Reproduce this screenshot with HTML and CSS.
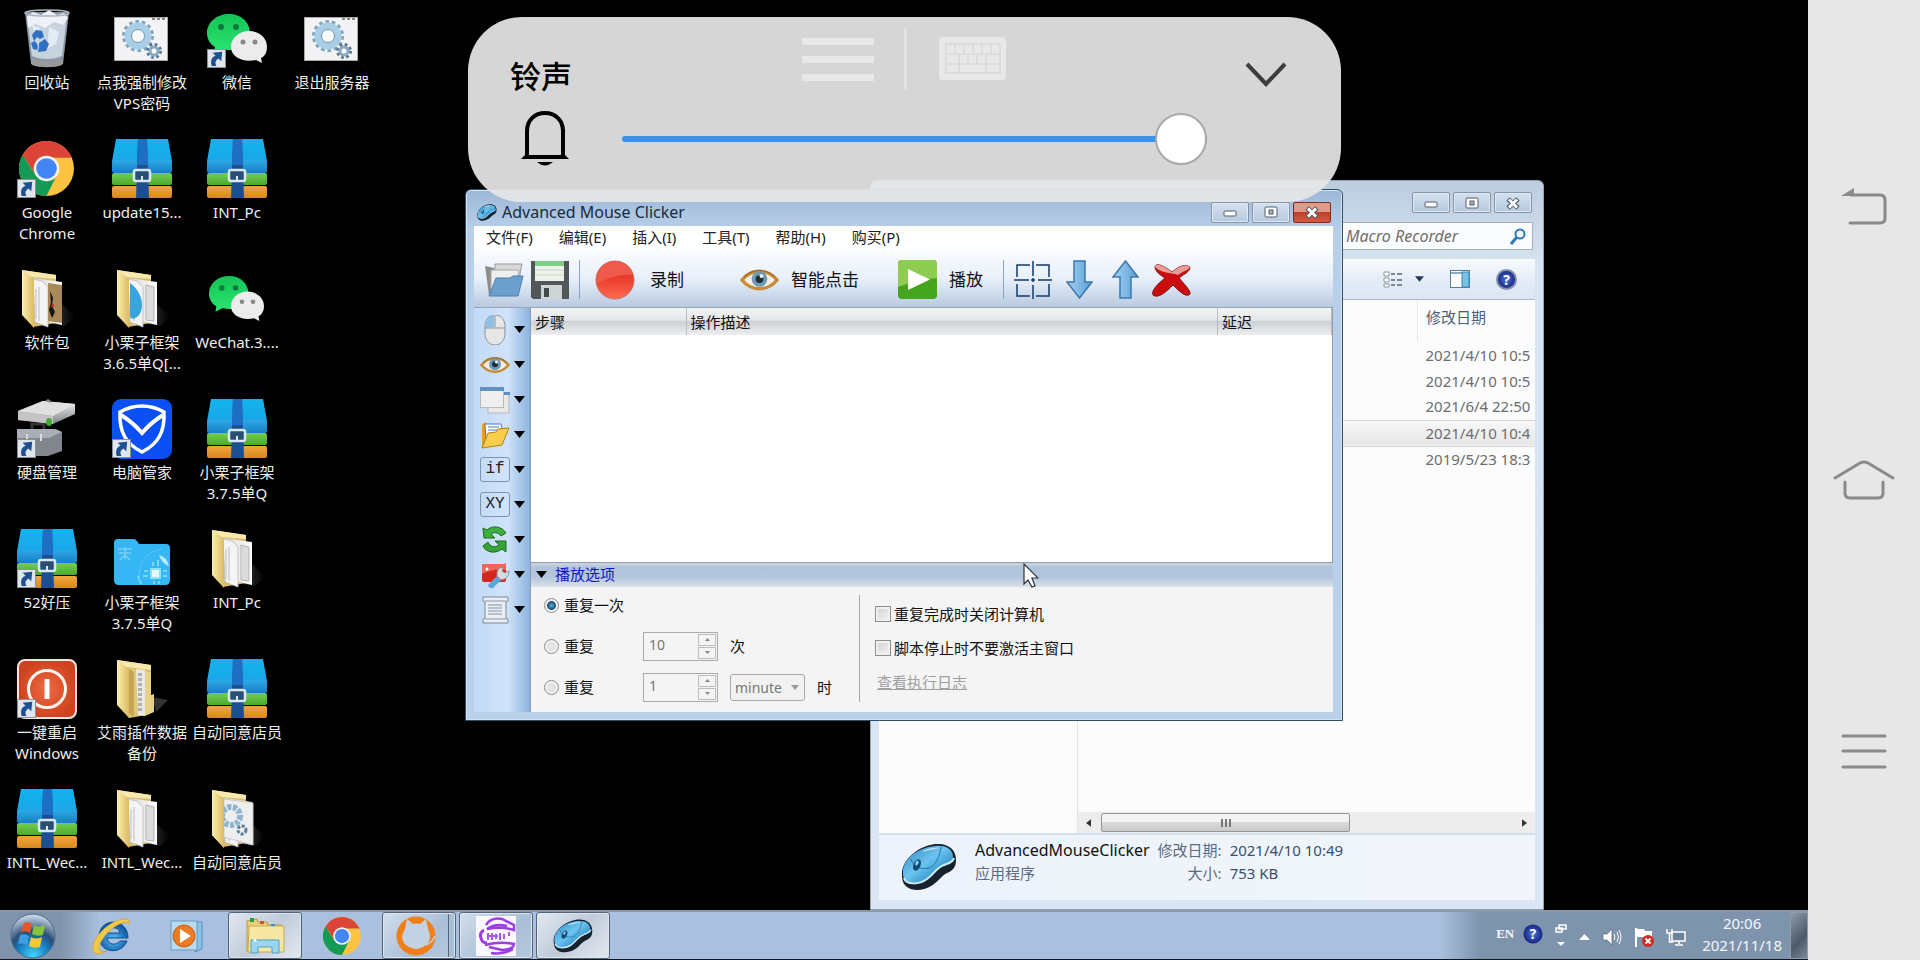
FILE: index.html
```html
<!DOCTYPE html>
<html lang="zh-CN">

<head>
    <meta charset="UTF-8">
    <meta name="viewport" content="width=device-width, initial-scale=1.0">
    <title>Remote Desktop</title>
    <link rel="stylesheet" href="styles.css">
</head>

<body>
    <!-- shared icons -->
    <svg class="sprite" aria-hidden="true">
        <defs>
            <linearGradient id="g-sky" x1="0" y1="0" x2="0" y2="1">
                <stop offset="0" stop-color="#12b4ee" /><stop offset="1" stop-color="#1aa6e8" />
            </linearGradient>
            <linearGradient id="g-blue" x1="0" y1="0" x2="0" y2="1">
                <stop offset="0" stop-color="#2fa8e4" /><stop offset="1" stop-color="#1580c8" />
            </linearGradient>
            <linearGradient id="g-green" x1="0" y1="0" x2="0" y2="1">
                <stop offset="0" stop-color="#74cc50" /><stop offset="1" stop-color="#4bab2d" />
            </linearGradient>
            <linearGradient id="g-orange" x1="0" y1="0" x2="0" y2="1">
                <stop offset="0" stop-color="#f0a63c" /><stop offset="1" stop-color="#d98720" />
            </linearGradient>
            <linearGradient id="g-folder" x1="0" y1="0" x2="1" y2="0">
                <stop offset="0" stop-color="#fbefaf" /><stop offset="1" stop-color="#dcbb62" />
            </linearGradient>
            <linearGradient id="g-paper" x1="0" y1="0" x2="1" y2="0">
                <stop offset="0" stop-color="#d2d2d2" /><stop offset="1" stop-color="#ffffff" />
            </linearGradient>
            <linearGradient id="g-metal" x1="0" y1="0" x2="0" y2="1">
                <stop offset="0" stop-color="#f4f4f4" /><stop offset="1" stop-color="#7d8286" />
            </linearGradient>
            <linearGradient id="g-wx" x1="0" y1="0" x2="0" y2="1">
                <stop offset="0" stop-color="#12c455" /><stop offset="1" stop-color="#2ee472" />
            </linearGradient>
            <linearGradient id="g-mouse" x1="0" y1="0" x2="1" y2="1">
                <stop offset="0" stop-color="#2f86c2" /><stop offset=".45" stop-color="#6cc4ee" /><stop offset=".75" stop-color="#2c8fcb" /><stop offset="1" stop-color="#125590" />
            </linearGradient>
            <linearGradient id="g-arrow" x1="0" y1="0" x2="1" y2="0">
                <stop offset="0" stop-color="#a4d3f4" /><stop offset="1" stop-color="#5b9ed6" />
            </linearGradient>
            <radialGradient id="g-ie" cx=".5" cy=".6">
                <stop offset="0" stop-color="#5cc4f6" /><stop offset="1" stop-color="#125ba8" />
            </radialGradient>
            <linearGradient id="g-ball" x1="0" y1="0" x2="0" y2="1">
                <stop offset="0" stop-color="#d81a0c" /><stop offset="1" stop-color="#ff6a52" />
            </linearGradient>
            <radialGradient id="g-power"><stop offset="0" stop-color="#ee6a42" /><stop offset="1" stop-color="#cf4220" /></radialGradient>
            <radialGradient id="g-orb" cx=".5" cy=".95" r=".9">
                <stop offset="0" stop-color="#3fd5fb" /><stop offset=".45" stop-color="#1673b4" /><stop offset=".62" stop-color="#2c4d75" /><stop offset="1" stop-color="#c3d2e2" />
            </radialGradient>
            <radialGradient id="g-help"><stop offset="0" stop-color="#4f74dc" /><stop offset="1" stop-color="#15247f" /></radialGradient>
            <linearGradient id="g-fade" x1="0" y1="0" x2="1" y2="0">
                <stop offset="0" stop-color="#4a4a4a" /><stop offset="1" stop-color="#000000" />
            </linearGradient>
        </defs>

        <symbol id="i-shortcut" viewBox="0 0 20 20">
            <rect x=".5" y=".5" width="19" height="19" fill="#dfe6ee" stroke="#8a8f96" />
            <path d="M5 18C3 11 6 8 9 7L6 4l10-1-1 10-3-3c-3 2-4 4-2 8z" fill="#1d4f91" />
        </symbol>

        <symbol id="i-zip" viewBox="0 0 60 60">
            <path d="M4 0h52l4 22H0z" fill="url(#g-sky)" />
            <rect y="21" width="60" height="13" rx="2" fill="url(#g-blue)" />
            <rect y="34" width="60" height="12" rx="2" fill="url(#g-green)" />
            <rect y="47" width="60" height="12" rx="2" fill="url(#g-orange)" />
            <path d="M26 0h9l2 59H24z" fill="#1c4f92" />
            <path d="M26 0h9l1 26H25z" fill="#1e6fc4" />
            <rect x="22" y="31" width="16" height="11" rx="2" fill="#2a4f74" stroke="#d8e8f4" stroke-width="2.500" />
            <path d="M30 37v5" stroke="#d8e8f4" stroke-width="2" />
        </symbol>

        <symbol id="i-gears" viewBox="0 0 54 44">
            <rect x=".5" y=".5" width="53" height="43" fill="#f3f3f5" stroke="#a8a8a8" />
            <path d="M38 2h3M43 2h3M48 2h3" stroke="#888" stroke-width="2" />
            <circle cx="24" cy="19" r="14" fill="none" stroke="#7fa3bf" stroke-width="4" stroke-dasharray="3.500 2.800" />
            <circle cx="24" cy="19" r="10" fill="none" stroke="#a9cfe6" stroke-width="7" />
            <circle cx="24" cy="19" r="6.500" fill="#f6f9fb" stroke="#7595ae" />
            <circle cx="40" cy="34" r="6.500" fill="none" stroke="#59748f" stroke-width="3" stroke-dasharray="2.600 2.500" />
            <circle cx="40" cy="34" r="4" fill="#fff" stroke="#88a9c3" stroke-width="3" />
        </symbol>

        <symbol id="i-wechat" viewBox="0 0 60 50">
            <path d="M22 1C10 1 0 9 0 20c0 6 3 11 8 14l-1 6 8-4c14 4 28-3 28-16C43 9 34 1 22 1z" fill="url(#g-wx)" />
            <circle cx="14" cy="14" r="3" fill="#0b7a3a" /><circle cx="29" cy="14" r="3" fill="#0b7a3a" />
            <path d="M42 18c10 0 18 7 18 16 0 5-2 9-6 11l1 5-6-3c-13 3-25-3-25-13 0-9 8-16 18-16z" fill="#ececec" />
            <circle cx="36" cy="29" r="2.500" fill="#888" /><circle cx="48" cy="29" r="2.500" fill="#888" />
        </symbol>

        <symbol id="i-chrome" viewBox="0 0 56 56">
            <circle cx="28" cy="28" r="28" fill="#fdc341" />
            <path d="M3.750 14A28 28 0 0 1 52.250 14L54 17H28L17 34z" fill="#db4437" />
            <path d="M3.750 14A28 28 0 0 0 28 56L38 36 17 34.500z" fill="#159a55" />
            <circle cx="28" cy="28" r="13" fill="#f3f3f3" />
            <circle cx="28" cy="28" r="10.500" fill="#4285f4" />
        </symbol>

        <symbol id="i-folder" viewBox="0 0 60 60">
            <path d="M44 34l14 14-10 9-12-2z" fill="url(#g-fade)" opacity=".7" />
            <path d="M5 1l34 5v48L16 58z" fill="#d9bc6c" />
            <path d="M5 1l34 5v4L14 8z" fill="#f7e9ae" />
            <path d="M16 9l29 4v43l-26-6z" fill="url(#g-paper)" />
            <path d="M34 16l8 2v34l-8-1z" fill="#dcdcdc" stroke="#b5b5b5" />
            <path d="M16 10l9 2 6 6v40L18 53z" fill="#f4f4f4" stroke="#bbb" stroke-width=".8" />
            <path d="M19 20v30M22 18v34" stroke="#bbb" />
            <path d="M5 1l12 9v49L5 46z" fill="url(#g-folder)" />
        </symbol>

        <symbol id="i-mouse" viewBox="0 0 56 46">
            <path d="M1 31C0 18 14 3 34 0c14-1 21 6 21 16 0 8-4 11-9 13-6 3-9 9-16 13-8 5-19 5-24 1C2 40 1 36 1 31z" fill="#16222d" />
            <path d="M2 29C1 17 14 4 34 2c12-1 18 4 18 11 0 6-5 7-10 9-8 3-10 9-16 13-7 5-16 6-20 3-3-2-4-5-4-9z" fill="url(#g-mouse)" />
            <path d="M3 34c2 7 15 7 23 1 7-5 9-11 17-14 5-2 9-3 10-7" fill="none" stroke="#cfe9f7" stroke-width="2" />
            <path d="M10 15c2 7 9 11 18 9 7-2 11-13 12-21" fill="none" stroke="#2675ac" />
            <path d="M20 8c6-4 14-5 19-4-7 1-13 3-19 4z" fill="#c6eafb" />
            <ellipse cx="16" cy="21" rx="3.500" ry="6" transform="rotate(24 16 21)" fill="#134a78" />
            <ellipse cx="16" cy="19" rx="1.500" ry="2.500" transform="rotate(24 16 19)" fill="#8fd6f4" />
        </symbol>

        <symbol id="i-eye" viewBox="0 0 40 26">
            <path d="M2 13C12 1 28 1 38 13 28 25 12 25 2 13z" fill="#f3eee8" stroke="#c88b35" stroke-width="3.500" />
            <circle cx="20" cy="12" r="8" fill="#6f9ab6" /><circle cx="20" cy="12" r="4" fill="#1d2d3b" />
            <circle cx="22" cy="9" r="2" fill="#fff" />
            <path d="M4 10C13 1 27 1 36 10" fill="none" stroke="#8b6430" />
        </symbol>

        <symbol id="i-down" viewBox="0 0 11 7"><path d="M0 0h11L5.500 7z" fill="#000" /></symbol>
        <symbol id="i-min" viewBox="0 0 14 14"><rect x="1" y="6" width="12" height="5" rx="1" fill="#fff" stroke="#555f6b" /></symbol>
        <symbol id="i-max" viewBox="0 0 14 14">
            <rect x="1" y="2" width="12" height="10" rx="1" fill="#fff" stroke="#555f6b" />
            <rect x="5" y="5" width="4" height="4" fill="#9fb4cb" stroke="#555f6b" />
        </symbol>
        <symbol id="i-close" viewBox="0 0 14 14">
            <path d="M2 3l10 9M12 3L2 12" stroke="#555f6b" stroke-width="5" /><path d="M3 3.500l8 8M11 3.500l-8 8" stroke="#fff" stroke-width="3" />
        </symbol>
    </svg>

    <div class="screen">
        <div class="desktop">
            <div class="icons">
                <button class="icon">
                    <svg class="pic" viewBox="0 0 60 60">
                        <path d="M8 3h44l-6 52c-8 4-24 4-32 0z" fill="#8c98a5" />
                        <path d="M10 7h40l-5 40c-8 4-22 4-30 0z" fill="#c6d2de" />
                        <path d="M10 7l6-4 8 3 8-5 8 5 7-2 4 5-5 7-9-3-9 6-9-4-8 4z" fill="#eef2f6" />
                        <path d="M32 18l10 5-3 12-9 5zM15 16l8 3-4 9z" fill="#e3ebf3" />
                        <ellipse cx="30" cy="4" rx="22" ry="3" fill="none" stroke="#aab4bd" stroke-width="1.500" />
                        <path d="M15 26l4-5 6 1 2 6-4 2-3-2-3 4zM14 34l4-2 3 5-1 4-4-1zM22 34l6-4 4 5-3 7-8 1 1-5z" fill="#2f6fc0" />
                        <path d="M14 50c8 4 24 4 32 0l-1 6c-8 3-22 3-30 0z" fill="#9a9a98" />
                    </svg>
                    <span>回收站</span>
                </button>
                <button class="icon">
                    <svg class="pic" viewBox="0 0 60 60"><use href="#i-chrome" x="2" y="2" width="55" height="55" /><use href="#i-shortcut" y="40" width="19" height="19" /></svg>
                    <span>Google<br>Chrome</span>
                </button>
                <button class="icon">
                    <svg class="pic" viewBox="0 0 60 60"><use href="#i-folder" width="60" height="60" /><path d="M31 14l14 2v38l-14-2z" fill="#a9895a" /><path d="M33 22l3 7-1 8 3 6-3 6-3-8 2-8z" fill="#111" /><path d="M34 36l3-1v3h-3z" fill="#c22" /></svg>
                    <span>软件包</span>
                </button>
                <button class="icon">
                    <svg class="pic" viewBox="0 0 60 60">
                        <path d="M0 30h38l7 3v19l-14 5H0z" fill="#80868c" /><path d="M0 30h38l7 3-13 6H0z" fill="#a9afb4" />
                        <path d="M15 30v-5h12v5" fill="none" stroke="#333" stroke-width="3" /><path d="M10 35v7M24 35v7" stroke="#ddd" stroke-width="2" />
                        <path d="M1 12L26 2l32 3v10L36 25 1 21z" fill="url(#g-metal)" /><path d="M1 12L26 2l32 3-22 12z" fill="#e0e0e0" />
                        <path d="M1 13l35 4v8L1 21z" fill="#c4c4c4" /><path d="M28 2l3-2 3 2v2z" fill="#888" /><ellipse cx="32" cy="23" rx="3" ry="4" fill="#3fae2f" />
                        <use href="#i-shortcut" y="40" width="19" height="19" />
                    </svg>
                    <span>硬盘管理</span>
                </button>
                <button class="icon">
                    <svg class="pic" viewBox="0 0 60 60"><use href="#i-zip" width="60" height="60" /><use href="#i-shortcut" y="40" width="19" height="19" /></svg>
                    <span>52好压</span>
                </button>
                <button class="icon">
                    <svg class="pic" viewBox="0 0 60 60">
                        <rect x="1" y="1" width="58" height="58" rx="7" fill="url(#g-power)" stroke="#f3e4df" stroke-width="2" />
                        <circle cx="30" cy="30" r="18.500" fill="none" stroke="#fff5ee" stroke-width="3" /><path d="M30 20v20" stroke="#fff" stroke-width="5" />
                        <use href="#i-shortcut" y="40" width="19" height="19" />
                    </svg>
                    <span>一键重启<br>Windows</span>
                </button>
                <button class="icon">
                    <svg class="pic"><use href="#i-zip" /></svg>
                    <span>INTL_Wec...</span>
                </button>

                <button class="icon">
                    <svg class="pic" viewBox="0 0 60 60"><use href="#i-gears" x="2" y="8" width="54" height="44" /></svg>
                    <span>点我强制修改<br>VPS密码</span>
                </button>
                <button class="icon">
                    <svg class="pic"><use href="#i-zip" /></svg>
                    <span>update15...</span>
                </button>
                <button class="icon">
                    <svg class="pic" viewBox="0 0 60 60"><use href="#i-folder" width="60" height="60" /><path d="M18 14c7 5 12 13 12 22 0 7-3 12-9 14l-3-2z" fill="#38a6dc" /></svg>
                    <span>小栗子框架<br>3.6.5单Q[...</span>
                </button>
                <button class="icon">
                    <svg class="pic" viewBox="0 0 60 60">
                        <rect width="60" height="60" rx="9" fill="#0a50f5" />
                        <path d="M30 7c7 0 15 2 22 6 1 20-6 32-22 40C14 45 7 33 8 13c7-4 15-6 22-6z" fill="none" stroke="#fff" stroke-width="3.500" />
                        <path d="M9 16c8 5 15 11 21 18 6-7 13-13 21-18" fill="none" stroke="#fff" stroke-width="4" />
                        <use href="#i-shortcut" y="40" width="19" height="19" />
                    </svg>
                    <span>电脑管家</span>
                </button>
                <button class="icon">
                    <svg class="pic" viewBox="0 0 60 60">
                        <path d="M2 14q0-4 4-4h15q3 0 4 2l2 3h27q4 0 4 4v32q0 5-5 5H7q-5 0-5-5z" fill="#35b6f5" />
                        <path d="M6 20h14M7 24h12M13 18v12M8 31l5-5 5 5" fill="none" stroke="#75d3fb" stroke-width="1.500" />
                        <path d="M47 26q8 2 10 11-7-2-10-11z" fill="#b9e9fd" /><rect x="39" y="40" width="9" height="9" fill="#e8fbff" stroke="#8ce0fb" stroke-width="2" />
                        <path d="M41 37v-4M46 37v-6M51 42h4M51 47h4M36 42h-4M36 47h-5M42 52v3M47 52v3M26 47l3 8" stroke="#9be2fb" stroke-width="1.500" />
                        <path d="M28 55Q24 24 50 20" fill="none" stroke="#58c6f8" />
                    </svg>
                    <span>小栗子框架<br>3.7.5单Q</span>
                </button>
                <button class="icon">
                    <svg class="pic" viewBox="0 0 60 60">
                        <path d="M40 38l16 3-12 12z" fill="#333" /><path d="M5 1l34 5v48L16 58z" fill="#d9bc6c" /><path d="M5 1l34 5v5L14 8z" fill="#f7e9ae" />
                        <path d="M17 9l17 3v44l-17 3z" fill="#e0c879" /><path d="M24 10l9 1v46l-7-1z" fill="#e9e9e9" /><path d="M27 14v40M29 14v40" stroke="#777" stroke-dasharray="3 2" />
                        <path d="M33 12l6 2v22l3-1v18l-9 4z" fill="#e6d184" /><path d="M17 10l5 3v46l-5-5z" fill="#c7a552" /><path d="M5 1l12 9v49L5 46z" fill="url(#g-folder)" />
                    </svg>
                    <span>艾雨插件数据<br>备份</span>
                </button>
                <button class="icon">
                    <svg class="pic"><use href="#i-folder" /></svg>
                    <span>INTL_Wec...</span>
                </button>

                <button class="icon">
                    <svg class="pic" viewBox="0 0 60 60"><use href="#i-wechat" y="4" width="60" height="50" /><use href="#i-shortcut" y="40" width="19" height="19" /></svg>
                    <span>微信</span>
                </button>
                <button class="icon">
                    <svg class="pic"><use href="#i-zip" /></svg>
                    <span>INT_Pc</span>
                </button>
                <button class="icon">
                    <svg class="pic" viewBox="0 0 60 60"><use href="#i-wechat" x="2" y="6" width="55" height="46" /></svg>
                    <span>WeChat.3....</span>
                </button>
                <button class="icon">
                    <svg class="pic"><use href="#i-zip" /></svg>
                    <span>小栗子框架<br>3.7.5单Q</span>
                </button>
                <button class="icon">
                    <svg class="pic"><use href="#i-folder" /></svg>
                    <span>INT_Pc</span>
                </button>
                <button class="icon">
                    <svg class="pic"><use href="#i-zip" /></svg>
                    <span>自动同意店员</span>
                </button>
                <button class="icon">
                    <svg class="pic" viewBox="0 0 60 60">
                        <use href="#i-folder" width="60" height="60" /><path d="M17 10l29 4v42l-29-8z" fill="#eee" stroke="#ccc" />
                        <circle cx="24" cy="27" r="9" fill="none" stroke="#8fb4cd" stroke-width="6" stroke-dasharray="4 1.500" /><circle cx="35" cy="41" r="4" fill="none" stroke="#5b7f9c" stroke-width="3" stroke-dasharray="3 1.500" />
                        <path d="M5 1l12 9v49L5 46z" fill="url(#g-folder)" />
                    </svg>
                    <span>自动同意店员</span>
                </button>

                <button class="icon">
                    <svg class="pic" viewBox="0 0 60 60"><use href="#i-gears" x="2" y="8" width="54" height="44" /></svg>
                    <span>退出服务器</span>
                </button>
            </div>

            <!-- file explorer -->
            <div class="window explorer">
                <div class="titlebar">
                    <div class="win-buttons">
                        <button aria-label="最小化"><svg width="14" height="14"><use href="#i-min" /></svg></button>
                        <button aria-label="最大化"><svg width="14" height="14"><use href="#i-max" /></svg></button>
                        <button aria-label="关闭"><svg width="14" height="14"><use href="#i-close" /></svg></button>
                    </div>
                </div>
                <div class="search-row">
                    <div class="search">
                        <input type="text" placeholder="Macro Recorder" aria-label="Macro Recorder">
                        <svg width="16" height="17" viewBox="0 0 16 17"><circle cx="10" cy="6" r="4.500" fill="#eef6fc" stroke="#2f78bd" stroke-width="2" /><path d="M7 9l-6 7" stroke="#2f78bd" stroke-width="3" /></svg>
                    </div>
                </div>
                <div class="ex-toolbar">
                    <button aria-label="视图"><svg width="20" height="17" viewBox="0 0 20 17"><path d="M1 1h5v4H1zM1 7h5v4H1zM1 13h5v3H1z" fill="#fff" stroke="#8d97a3" /><path d="M8 3h4M14 3h5M8 9h4M14 9h5M8 14h4M14 14h5" stroke="#7e8894" stroke-width="2" /></svg></button>
                    <button aria-label="更多"><svg width="9" height="6" viewBox="0 0 11 7"><path d="M0 0h11L5.500 7z" fill="#1e395b" /></svg></button>
                    <button aria-label="预览窗格"><svg width="20" height="18" viewBox="0 0 20 18"><rect x=".5" y=".5" width="19" height="17" fill="#fff" stroke="#5c7c9a" /><path d="M1 3h18" stroke="#8ba9c4" stroke-width="2" /><rect x="12" y="2" width="7" height="15" fill="#74c2e8" stroke="#3f87b5" /></svg></button>
                    <button aria-label="帮助"><svg width="21" height="21" viewBox="0 0 21 21"><circle cx="10.500" cy="10.500" r="9.500" fill="url(#g-help)" stroke="#8290b0" stroke-width="2" /><text x="10.500" y="15.500" text-anchor="middle" class="q-mark">?</text></svg></button>
                </div>
                <div class="ex-body">
                    <div class="ex-tree"></div>
                    <div class="ex-files">
                        <table>
                            <thead>
                                <tr><th class="col-name"></th><th>修改日期</th></tr>
                            </thead>
                            <tbody>
                                <tr><td></td><td>2021/4/10 10:5</td></tr>
                                <tr><td></td><td>2021/4/10 10:5</td></tr>
                                <tr><td></td><td>2021/6/4 22:50</td></tr>
                                <tr class="selected"><td></td><td>2021/4/10 10:4</td></tr>
                                <tr><td></td><td>2019/5/23 18:3</td></tr>
                            </tbody>
                        </table>
                        <div class="scrollbar">
                            <svg width="5" height="8" viewBox="0 0 6 9"><path d="M6 0v9L0 4.500z" fill="#333" /></svg>
                            <div class="thumb"><i></i><i></i><i></i></div>
                            <svg width="5" height="8" viewBox="0 0 6 9"><path d="M0 0v9l6-4.500z" fill="#333" /></svg>
                        </div>
                    </div>
                </div>
                <div class="details">
                    <svg class="details-icon"><use href="#i-mouse" /></svg>
                    <div class="details-grid">
                        <span class="file-name">AdvancedMouseClicker</span><span class="key">修改日期:</span><span>2021/4/10 10:49</span>
                        <span class="file-type">应用程序</span><span class="key">大小:</span><span>753 KB</span>
                    </div>
                </div>
            </div>

            <!-- Advanced Mouse Clicker -->
            <div class="window clicker">
                <div class="titlebar">
                    <svg width="20" height="17"><use href="#i-mouse" /></svg>
                    <span class="title">Advanced Mouse Clicker</span>
                    <div class="win-buttons">
                        <button aria-label="最小化"><svg width="14" height="14"><use href="#i-min" /></svg></button>
                        <button aria-label="最大化"><svg width="14" height="14"><use href="#i-max" /></svg></button>
                        <button class="close" aria-label="关闭"><svg width="14" height="14"><use href="#i-close" /></svg></button>
                    </div>
                </div>
                <div class="menu">
                    <button>文件(F)</button>
                    <button>编辑(E)</button>
                    <button>插入(I)</button>
                    <button>工具(T)</button>
                    <button>帮助(H)</button>
                    <button>购买(P)</button>
                </div>
                <div class="toolbar">
                    <button class="tool" aria-label="打开"><svg width="40" height="34" viewBox="0 0 40 34"><path d="M1 3l9 2v27H5z" fill="#8b8b8b" /><path d="M11 1h27l-3 15-25 14z" fill="#d8d8d8" stroke="#9a9a9a" /><path d="M7 7h28l-4 22H7z" fill="#eeeeee" stroke="#aaa" /><path d="M12 15h14l3-2h10l-5 20H5z" fill="#6d9fcd" stroke="#4c7ead" /></svg></button>
                    <button class="tool" aria-label="保存"><svg width="38" height="38" viewBox="0 0 38 38"><path d="M0 0h38v38H2l-2-2z" fill="#515659" /><rect x="4" width="29" height="20" fill="#eff2e9" /><rect x="4" width="29" height="5" fill="#7fce86" /><path d="M4 9h29M4 14h29" stroke="#cbd3c6" /><rect x="10" y="24" width="21" height="14" fill="#cfd4d6" /><rect x="13" y="27" width="5" height="9" fill="#44494c" /></svg></button>
                    <div class="sep"></div>
                    <button class="labelled record"><svg width="40" height="40" viewBox="0 0 40 40"><circle cx="20" cy="20" r="19" fill="url(#g-ball)" stroke="#c96e66" /><path d="M2 24C0 8 11 1 20 1s17 7 18 14C26 14 14 17 2 24z" fill="#ee5a4c" /></svg>录制</button>
                    <button class="labelled smart"><svg width="39" height="26"><use href="#i-eye" /></svg>智能点击</button>
                    <button class="labelled play"><svg width="39" height="39" viewBox="0 0 39 39"><rect width="39" height="39" rx="4" fill="#45a51d" /><path d="M0 4q0-4 4-4h31q4 0 4 4v14Q20 19 0 27z" fill="#8fcc52" /><path d="M10 9l22 10.500L10 30z" fill="#fff" /></svg>播放</button>
                    <div class="sep last"></div>
                    <button class="tool" aria-label="坐标"><svg width="38" height="38" viewBox="0 0 38 38"><path d="M16 4H3v12M22 4h13v12M35 23v12H22M16 35H3V23M19 0v15M19 24v14M0 19h15M24 19h14M19 17v4M17 19h4" fill="none" stroke="#123a6b" stroke-width="1.500" /></svg></button>
                    <button class="tool" aria-label="下移"><svg width="27" height="39" viewBox="0 0 27 39"><path d="M8 1h11v21h7L13.500 38 1 22h7z" fill="url(#g-arrow)" stroke="#3d78ad" stroke-width="1.500" /></svg></button>
                    <button class="tool" aria-label="上移"><svg width="27" height="39" viewBox="0 0 27 39"><path d="M8 38h11V17h7L13.500 1 1 17h7z" fill="url(#g-arrow)" stroke="#3d78ad" stroke-width="1.500" /></svg></button>
                    <button class="tool" aria-label="删除"><svg width="39" height="34" viewBox="0 0 39 34"><path d="M3 4C4 0 9 1 20 9 27 3 33 1 38 4c0 5-6 7-11 11 5 6 12 13 11 16-3 3-7 1-17-9C14 29 6 36 1 32c-2-5 6-12 12-17C8 12 3 8 3 4z" fill="#cc0d0d" stroke="#7d1010" /><path d="M3 4C4 0 9 1 20 9 27 3 33 1 38 4c-1 3-7 4-12 8-8-3-16-1-23-8z" fill="#e89c98" /></svg></button>
                </div>
                <div class="work">
                    <div class="sidebar">
                        <button aria-label="鼠标"><svg class="side-icon" viewBox="0 0 30 30"><path d="M5 12C5 4 9 0 15 0s10 4 10 12v6c0 7-4 12-10 12S5 25 5 18z" fill="#e6e6e4" stroke="#8d9299" /><path d="M5 13C5 4 9 0 14 0v12z" fill="#8fc0e8" /><path d="M5 13h20M15 1v11" stroke="#8d9299" /></svg><svg class="caret"><use href="#i-down" /></svg></button>
                        <button aria-label="识别"><svg class="side-icon"><use href="#i-eye" /></svg><svg class="caret"><use href="#i-down" /></svg></button>
                        <button aria-label="窗口"><svg class="side-icon" viewBox="0 0 30 30"><rect x="8" y="8" width="21" height="20" fill="#e9e9e9" stroke="#b5b5b5" /><path d="M22 7h8v3h-8z" fill="#5f8fc2" /><rect x=".5" y="2.500" width="23" height="20" fill="#efefef" stroke="#b9b9b9" /><path d="M0 2h24v4H0z" fill="#6291c4" /></svg><svg class="caret"><use href="#i-down" /></svg></button>
                        <button aria-label="文件"><svg class="side-icon" viewBox="0 0 30 30"><path d="M2 4l4-2v26H2z" fill="#e0a21f" /><path d="M5 4h16l2 9-17 8z" fill="#fff" stroke="#4c7db6" /><path d="M8 7h11M8 10h12" stroke="#4c7db6" /><path d="M2 28l6-15 8-1 2-3 11-1-7 17z" fill="#f8cf4b" stroke="#b47f13" /></svg><svg class="caret"><use href="#i-down" /></svg></button>
                        <button><span class="key-box">if</span><svg class="caret"><use href="#i-down" /></svg></button>
                        <button><span class="key-box">XY</span><svg class="caret"><use href="#i-down" /></svg></button>
                        <button aria-label="循环"><svg class="side-icon" viewBox="0 0 30 30"><path d="M4 13L3 3l4 2C12 0 22 1 26 8l-5 3c-3-4-7-4-10-2l4 4z" fill="#3fae3f" stroke="#1d6b25" /><path d="M26 16v11l-4-3c-6 5-16 4-19-3l5-4c2 5 7 6 11 3l-4-4z" fill="#37a437" stroke="#1d6b25" /></svg><svg class="caret"><use href="#i-down" /></svg></button>
                        <button aria-label="工具"><svg class="side-icon" viewBox="0 0 30 30"><rect x="2" y="4" width="24" height="18" rx="2" fill="#d5261d" /><path d="M2 6q0-2 2-2h20l2-1v7q-12-2-24 4z" fill="#ee6658" /><circle cx="7" cy="9" r="1.500" fill="#fff" /><path d="M8 25l9-9 4 4-8 8q-4 1-5-3z" fill="#5aa5d8" /><path d="M17 16q-1-8 6-9l-1 4 3 2 4-2q0 8-8 9z" fill="#d6dbe0" stroke="#8d9399" /></svg><svg class="caret"><use href="#i-down" /></svg></button>
                        <button aria-label="脚本"><svg class="side-icon" viewBox="0 0 30 30"><path d="M3 2h25v4l-2 1v16l2 1v4H3v-4l2-1V7L3 6z" fill="#e8eef4" stroke="#7d8994" /><path d="M5 6h21M5 24h21" stroke="#8d98a3" /><path d="M8 10h14M8 13h14M8 16h14M8 19h14" stroke="#8494a3" /></svg><svg class="caret"><use href="#i-down" /></svg></button>
                    </div>
                    <div class="main">
                        <div class="steps">
                            <table>
                                <thead>
                                    <tr><th class="col-step">步骤</th><th>操作描述</th><th class="col-delay">延迟</th></tr>
                                </thead>
                            </table>
                        </div>
                        <button class="section"><svg width="11" height="7"><use href="#i-down" /></svg>播放选项</button>
                        <div class="options">
                            <div class="repeat">
                                <div class="row">
                                    <label class="choice"><input type="radio" name="repeat" checked>重复一次</label>
                                </div>
                                <div class="row">
                                    <label class="choice"><input type="radio" name="repeat">重复</label>
                                    <div class="spin">
                                        <input type="text" value="10" aria-label="次数">
                                        <div class="spin-buttons">
                                            <button aria-label="增加"><svg width="5" height="3" viewBox="0 0 5 3"><path d="M0 3h5L2.500 0z" /></svg></button>
                                            <button aria-label="减少"><svg width="5" height="3" viewBox="0 0 5 3"><path d="M0 0h5L2.500 3z" /></svg></button>
                                        </div>
                                    </div>
                                    <span>次</span>
                                </div>
                                <div class="row">
                                    <label class="choice"><input type="radio" name="repeat">重复</label>
                                    <div class="spin">
                                        <input type="text" value="1" aria-label="时长">
                                        <div class="spin-buttons">
                                            <button aria-label="增加"><svg width="5" height="3" viewBox="0 0 5 3"><path d="M0 3h5L2.500 0z" /></svg></button>
                                            <button aria-label="减少"><svg width="5" height="3" viewBox="0 0 5 3"><path d="M0 0h5L2.500 3z" /></svg></button>
                                        </div>
                                    </div>
                                    <div class="unit">
                                        <select aria-label="单位"><option>minute</option></select>
                                        <svg width="8" height="5" viewBox="0 0 8 5"><path d="M0 0h8L4 5z" fill="#999" /></svg>
                                    </div>
                                    <span>时</span>
                                </div>
                            </div>
                            <div class="finish">
                                <label class="check"><input type="checkbox">重复完成时关闭计算机</label>
                                <label class="check"><input type="checkbox">脚本停止时不要激活主窗口</label>
                                <a class="log" href="#">查看执行日志</a>
                            </div>
                        </div>
                    </div>
                </div>
            </div>

            <svg class="cursor" viewBox="0 0 16 25"><path d="M1 1v20l4-4 4 7 3-1-3-8h6z" fill="#fff" stroke="#2c3440" stroke-width="1.200" /></svg>
        </div>

        <div class="taskbar">
            <button class="start" aria-label="开始">
                <svg width="46" height="46" viewBox="0 0 46 46">
                    <circle cx="23" cy="23" r="22" fill="url(#g-orb)" stroke="#4d6b8d" />
                    <path d="M14 10q4-2 8 1l-2 9q-4-3-9-1z" fill="#e8562a" /><path d="M24 12q4 3 11 0l-2 10q-6 2-11-1z" fill="#86c440" />
                    <path d="M10 22q5-2 9 1l-2 9q-4-3-9-1z" fill="#3f9ee0" /><path d="M21 24q5 3 11 0l-2 10q-6 2-11-1z" fill="#fbc92e" />
                </svg>
            </button>
            <button class="pinned wide" aria-label="Internet Explorer">
                <svg width="42" height="40" viewBox="0 0 42 40">
                    <path d="M38 22H17c1 7 9 8 13 3h7c-5 14-27 13-28-4C9 1 38 1 38 22zM17 17h13c-1-7-12-7-13 0z" fill="url(#g-ie)" stroke="#0d4f95" />
                    <path d="M40 8C40-4 14 7 5 24c-5 11-1 18 12 11-9 3-10-3-5-11C20 11 35 3 40 8z" fill="#f0c948" stroke="#c9a12d" stroke-width=".7" />
                </svg>
            </button>
            <button class="pinned" aria-label="Media Player">
                <svg width="36" height="34" viewBox="0 0 36 34">
                    <path d="M25 3h7v27l-7 3z" fill="#8dbfe3" stroke="#5592c0" /><rect x="1" y="2" width="26" height="29" fill="#b9d9ef" stroke="#5f9cc9" />
                    <circle cx="14" cy="17" r="11" fill="#ec7a21" stroke="#c95c10" /><path d="M10 10l11 7-11 7z" fill="#fff" />
                </svg>
            </button>
            <div class="tasks">
                <button class="task light" aria-label="资源管理器">
                    <svg width="42" height="38" viewBox="0 0 42 38">
                        <path d="M3 4l10-2 1 3 9 0 1 3h14v26H3z" fill="#e8cf79" stroke="#b89a45" /><path d="M5 9h35v26H4z" fill="#f5e6a2" stroke="#c7aa54" />
                        <path d="M6 1h4v4H6z" fill="#2d9c40" /><path d="M16 4h4v3h-4z" fill="#c8562d" /><path d="M27 7h4v2h-4z" fill="#3b8fd0" />
                        <path d="M7 36V23h28v13h-7v-6H14v6z" fill="#9bd5ef" stroke="#4f9fc7" /><path d="M11 21l2 4-4-1z" fill="#fff" />
                    </svg>
                </button>
                <button class="task plain" aria-label="Chrome"><svg width="38" height="38"><use href="#i-chrome" /></svg></button>
                <button class="task stacked" aria-label="编辑器">
                    <svg width="40" height="40" viewBox="0 0 40 40">
                        <circle cx="20" cy="20" r="19.500" fill="#f07f1a" />
                        <path d="M11 3l6 5q3-1 7 0l6-5 2 10q4 8 0 14-4 5-12 6-8-1-12-6-4-6 1-14z" fill="#c3d2e3" />
                        <path d="M30 29q6-2 9-9" fill="none" stroke="#c3d2e3" stroke-width="1.500" />
                    </svg>
                </button>
                <button class="task" aria-label="脚本工具">
                    <svg width="40" height="40" viewBox="0 0 40 40">
                        <rect width="40" height="40" fill="#fbf6ff" />
                        <path d="M10 9Q15 1 26 3l12 6v5Q26 10 11 13q8-6 20-3" fill="none" stroke="#9a3fe0" stroke-width="2.500" />
                        <path d="M8 14q-5 3-3 8 1 5 6 5" fill="none" stroke="#9a3fe0" stroke-width="3" />
                        <path d="M12 17v7M16 17v7M20 18v5M24 17v7M28 18v5M11 20h11M33 16v4" fill="none" stroke="#a85ae6" stroke-width="2" />
                        <path d="M9 29q15-4 29-1-1 6-12 6l-13-3M15 37q13 2 22-4" fill="none" stroke="#9a3fe0" stroke-width="2.500" />
                    </svg>
                </button>
                <button class="task light" aria-label="Advanced Mouse Clicker"><svg width="40" height="34"><use href="#i-mouse" /></svg></button>
            </div>
            <div class="tray">
                <span class="lang">EN</span>
                <svg width="20" height="20" viewBox="0 0 21 21"><circle cx="10.500" cy="10.500" r="10" fill="url(#g-help)" /><text x="10.500" y="15.500" text-anchor="middle" class="q-mark">?</text></svg>
                <svg width="12" height="24" viewBox="0 0 12 24"><path d="M4 1h7v4H4zM1 4h6v4H1z" fill="#8295ad" stroke="#fff" stroke-width="1.500" /><path d="M2 18h8l-4 4z" fill="#fff" /></svg>
                <svg width="11" height="6" viewBox="0 0 11 6" class="low"><path d="M0 6h11L5.500 0z" fill="#fff" /></svg>
                <svg width="20" height="18" viewBox="0 0 20 18" class="low"><path d="M1 6h4l5-5v16l-5-5H1z" fill="#fff" stroke="#56677b" stroke-width=".7" /><path d="M12 6q2 3 0 6M15 4q3 5 0 10M17 2q4 7 0 14" fill="none" stroke="#fff" /></svg>
                <svg width="20" height="20" viewBox="0 0 20 20" class="low"><path d="M2 1v19" stroke="#fff" stroke-width="2" /><path d="M3 2h7l1 2h7v8h-7l-1-2H3z" fill="#fff" /><circle cx="14" cy="14" r="6" fill="#cf2b20" /><path d="M11.500 11.500l5 5M16.500 11.500l-5 5" stroke="#fff" stroke-width="2" /></svg>
                <svg width="20" height="18" viewBox="0 0 20 18" class="low"><rect x="6" y="4" width="13" height="9" fill="#6e8299" stroke="#fff" stroke-width="1.500" /><path d="M9 17h8M13 13v3M1 1v4h5V1M3.500 5v9h4" fill="none" stroke="#fff" stroke-width="1.500" /></svg>
                <div class="clock"><span>20:06</span><span>2021/11/18</span></div>
            </div>
            <button class="show-desktop" aria-label="显示桌面"></button>
        </div>

        <!-- ringtone volume overlay -->
        <div class="volume">
            <div class="volume-head">
                <label for="ring">铃声</label>
                <div class="remote-tools">
                    <div class="bars"><i></i><i></i><i></i></div>
                    <svg width="67" height="43" viewBox="0 0 67 43">
                        <rect width="67" height="43" rx="4" fill="#e8e8e8" />
                        <path d="M7 7h54v29H7zM7 17h54M7 27h54M16 7v10M25 7v10M34 7v10M43 7v10M52 7v10M20 17v19M29 17v10M38 17v10M47 17v19" fill="none" stroke="#d8d8d8" stroke-width="1.500" />
                    </svg>
                </div>
                <button class="expand" aria-label="展开"><svg width="42" height="25" viewBox="0 0 42 25"><path d="M2 2l19 20L40 2" fill="none" stroke="#3d3d3d" stroke-width="4" /></svg></button>
            </div>
            <div class="volume-row">
                <svg width="48" height="56" viewBox="0 0 48 56">
                    <path d="M6 45V20C6 9 14 2 24 2s18 7 18 18v25" fill="none" stroke="#000" stroke-width="4" />
                    <path d="M4 44h40l4 4H0zM16 51h16q-8 7-16 0z" />
                </svg>
                <input type="range" id="ring" min="0" max="100" value="100">
            </div>
        </div>
    </div>

    <nav class="phone-nav">
        <button aria-label="返回"><svg width="46" height="37" viewBox="0 0 46 37"><path d="M10 7h29q5 0 5 5v18q0 5-5 5H9" fill="none" stroke="#8a8a8a" stroke-width="3" stroke-linecap="round" /><path d="M0 8L13 0v8z" fill="#8a8a8a" /></svg></button>
        <button aria-label="主页"><svg width="62" height="40" viewBox="0 0 62 40"><path d="M2 18L27 3q4-2 8 0l25 15M12 22v11q0 5 5 5h28q5 0 5-5V22" fill="none" stroke="#8a8a8a" stroke-width="3" stroke-linecap="round" /></svg></button>
        <button aria-label="菜单"><svg width="46" height="35" viewBox="0 0 46 35"><path d="M2 2h42M2 17h42M2 33h42" stroke="#8a8a8a" stroke-width="3" stroke-linecap="round" /></svg></button>
    </nav>
</body>

</html>
```

FILE: styles.css
```css
* {
    box-sizing: border-box;
}

body {
    margin: 0;
    display: flex;
    height: 100vh;
    overflow: hidden;
    background-color: #000;
    font-family: "Noto Sans", "Noto Sans CJK SC", sans-serif;
    font-size: 15px;
    line-height: 21px;
}

button {
    border: none;
    padding: 0;
    background: none;
    font: inherit;
    color: inherit;
}

svg {
    display: block;
    flex: none;
}

.sprite {
    position: absolute;
    width: 0;
    height: 0;
}

.q-mark {
    font-size: 14px;
    font-weight: 700;
    fill: white;
}

.screen {
    position: relative;
    flex: 1;
    display: flex;
    flex-direction: column;
}

.desktop {
    position: relative;
    flex: 1;
}

/* desktop icons */
.icons {
    display: grid;
    grid-auto-flow: column;
    grid-template-rows: repeat(7, 1fr);
    grid-auto-columns: 95px;
    height: 100%;
}

.icon {
    display: flex;
    flex-direction: column;
    align-items: center;
    gap: 3px;
    padding: 9px 1px 0 0;
    color: #eee;
    white-space: nowrap;
}

.pic {
    width: 60px;
    height: 60px;
}

/* windows */
.window {
    position: absolute;
    display: flex;
    flex-direction: column;
    border: 1px solid #3c4a5c;
}

.titlebar {
    display: flex;
    align-items: center;
}

.win-buttons {
    display: flex;
    gap: 3px;
    margin-left: auto;
}

.win-buttons button {
    display: flex;
    justify-content: center;
    align-items: center;
    width: 38px;
    height: 21px;
    border: 1px solid #8594a8;
    border-radius: 2px;
    background: linear-gradient(#d5e1ef, #b7c9de);
    box-shadow: inset 0 0 0 1px #dfe9f4;
}

.win-buttons .close {
    border-color: #7c2a22;
    background: linear-gradient(#e19a88 45%, #c0402a 50%, #cf5b40);
    box-shadow: none;
}

.explorer {
    left: 870px;
    top: 180px;
    bottom: 0;
    width: 674px;
    padding: 0 8px 9px;
    border-color: #97a4b3;
    border-radius: 6px 6px 0 0;
    background: linear-gradient(#bccde0, #d8e4f1 90px, #dae6f3);
}

.explorer .titlebar {
    padding: 11px 3px 0 0;
}

.search-row {
    display: flex;
    justify-content: flex-end;
    padding: 9px 2px 9px 0;
}

.search {
    display: flex;
    align-items: center;
    width: 200px;
    height: 28px;
    padding-right: 6px;
    border: 1px solid #a3b0bf;
    background-color: #fafbfc;
}

.search input {
    flex: 1;
    min-width: 0;
    border: none;
    padding: 0 0 0 12px;
    background: none;
    font: inherit;
    font-size: 16px;
    font-style: italic;
}

.search input::placeholder {
    color: #707070;
}

.ex-toolbar {
    display: flex;
    justify-content: flex-end;
    align-items: center;
    height: 41px;
    padding-right: 18px;
    border-bottom: 1px solid #a9bacd;
    background: linear-gradient(#fafcfe, #e4edf7 50%, #dbe6f3);
}

.ex-toolbar button + button {
    margin-left: 12px;
}

.ex-toolbar button:nth-child(n+3) {
    margin-left: 26px;
}

.ex-body {
    flex: 1;
    display: flex;
    min-height: 0;
    background-color: #fcfcfc;
}

.ex-tree {
    width: 199px;
    border-right: 1px solid #dde4ec;
}

.ex-files {
    flex: 1;
    min-width: 0;
    display: flex;
    flex-direction: column;
    justify-content: space-between;
    overflow: hidden;
}

.ex-files table {
    width: 100%;
    table-layout: fixed;
    border-collapse: collapse;
}

.ex-files th {
    height: 42px;
    padding: 0 0 8px 8px;
    border-left: 1px solid #e4e9ef;
    font-weight: 400;
    text-align: left;
    color: #4c607a;
}

.ex-files .col-name {
    width: 339px;
}

.ex-files td {
    height: 26px;
    padding: 0 0 0 8px;
    white-space: nowrap;
    overflow: hidden;
    color: #6d6d6d;
}

.ex-files .selected td {
    border-top: 1px solid #d9d9d9;
    border-bottom: 1px solid #d9d9d9;
    background: linear-gradient(#f8f8f8, #e6e6e6);
}

.scrollbar {
    display: flex;
    align-items: center;
    height: 21px;
    padding: 0 8px;
    background-color: #ededed;
}

.thumb {
    display: flex;
    justify-content: center;
    align-items: center;
    gap: 2px;
    width: 249px;
    height: 19px;
    margin: 0 auto 0 10px;
    border: 1px solid #979797;
    border-radius: 2px;
    background: linear-gradient(#f4f4f4 45%, #dadada 50%, #c9c9c9);
}

.thumb i {
    width: 2px;
    height: 8px;
    background-color: #777;
}

.details {
    display: flex;
    align-items: flex-start;
    gap: 18px;
    height: 67px;
    padding: 4px 22px;
    border-top: 2px solid #d3dfec;
    background: linear-gradient(90deg, #edf3fb, #f1f5fb);
}

.details-icon {
    width: 56px;
    height: 46px;
    margin-top: 5px;
}

.details-grid {
    display: grid;
    grid-template-columns: repeat(3, auto);
    column-gap: 8px;
    line-height: 23px;
    color: #3a4f6c;
}

.details-grid .file-name {
    font-size: 16px;
    color: #111;
}

.details-grid .key {
    text-align: right;
    color: #5a6b84;
}

.details-grid .file-type {
    color: #5a6b84;
}

.clicker {
    left: 465px;
    top: 189px;
    width: 878px;
    height: 532px;
    padding: 0 9px 8px 8px;
    border-color: #2f4f66;
    border-radius: 6px 6px 0 0;
    background: linear-gradient(#9db7d6, #b7cfe9 40px, #b9d2ec);
    box-shadow: inset 0 0 0 1px #d3e4f4;
}

.clicker .titlebar {
    height: 36px;
    padding: 8px 2px 0 3px;
    gap: 5px;
    color: #1b2a3c;
}

.title {
    font-size: 16px;
}

.menu {
    display: flex;
    gap: 26px;
    height: 23px;
    padding-left: 12px;
    background-color: #fff;
    color: #222;
}

.toolbar {
    display: flex;
    align-items: center;
    height: 59px;
    padding: 3px 0 0 7px;
    border-bottom: 1px solid #9aa5b3;
    background: linear-gradient(#fafcff, #e9f0fa 50%, #b9cae0);
    font-size: 17px;
    color: #111;
}

.tool {
    width: 46px;
}

.tool svg {
    margin: 0 auto;
}

.sep {
    width: 1px;
    height: 39px;
    margin: 0 15px 0 6px;
    background-color: #8aa6c4;
}

.sep.last {
    margin: 0 6px 0 0;
}

.labelled {
    display: flex;
    align-items: center;
    gap: 12px;
}

.record {
    width: 145px;
    gap: 15px;
}

.smart {
    width: 158px;
}

.play {
    width: 105px;
}

.work {
    flex: 1;
    display: flex;
    min-height: 0;
}

.sidebar {
    width: 56px;
    padding-top: 4px;
    background: linear-gradient(90deg, #c3d9f5, #cfe3fb 60%, #8db3dd);
}

.sidebar button {
    display: flex;
    align-items: center;
    gap: 4px;
    width: 100%;
    height: 35px;
    padding-left: 6px;
}

.side-icon {
    width: 30px;
    height: 30px;
}

.caret {
    width: 11px;
    height: 7px;
}

.key-box {
    width: 30px;
    height: 25px;
    border: 1px solid #7f94ad;
    border-radius: 3px;
    font-family: "Liberation Mono", monospace;
    font-size: 16px;
    line-height: 23px;
    text-align: center;
    color: #222;
}

.main {
    flex: 1;
    display: flex;
    flex-direction: column;
    border-left: 1px solid #8e9cad;
    background-color: #f4f4f4;
}

.steps {
    flex: 1;
    border-right: 1px solid #8e9cad;
    border-bottom: 1px solid #8e9cad;
    background-color: #fff;
}

.steps table {
    width: 100%;
    border-collapse: collapse;
    table-layout: fixed;
}

.steps th {
    height: 27px;
    padding: 1px 4px 0;
    border-right: 1px solid #b9bdc2;
    background: linear-gradient(#f2f4f6, #e4e6e9 45%, #cdd0d4 50%, #eceef0);
    font-weight: 400;
    text-align: left;
    color: #111;
}

.col-step {
    width: 155px;
}

.col-delay {
    width: 114px;
}

.section {
    display: flex;
    align-items: center;
    gap: 8px;
    height: 24px;
    padding: 0 0 2px 5px;
    background: linear-gradient(#cbd5e1, #afc3dc 20%, #b3c6dc 60%, #dbe2e9);
    color: #1414c8;
}

.options {
    display: flex;
    height: 125px;
    color: #111;
}

.repeat {
    display: flex;
    flex-direction: column;
    gap: 11px;
    width: 328px;
    padding: 3px 0 0 13px;
}

.row {
    display: flex;
    align-items: center;
    gap: 12px;
    height: 30px;
}

.choice {
    display: flex;
    align-items: center;
    gap: 5px;
    width: 87px;
    white-space: nowrap;
}

.choice input {
    appearance: none;
    width: 15px;
    height: 15px;
    margin: 0;
    border: 1px solid #8f8f8f;
    border-radius: 50%;
    background: radial-gradient(#e9e9e9, #d0d0d0);
    box-shadow: inset 0 0 0 2px #f4f4f4;
}

.choice input:checked {
    background: radial-gradient(#5fb4e0, #12466f 45%, #d5dfe6 55%);
}

.spin {
    display: flex;
    width: 75px;
    height: 29px;
    border: 1px solid #ababab;
}

.spin input {
    flex: 1;
    min-width: 0;
    border: none;
    padding: 0 0 4px 5px;
    background: none;
    font: inherit;
    font-size: 14px;
    color: #777;
}

.spin-buttons {
    display: flex;
    flex-direction: column;
    gap: 1px;
    width: 20px;
    padding: 1px;
}

.spin-buttons button {
    flex: 1;
    display: flex;
    justify-content: center;
    align-items: center;
    border: 1px solid #bdbdbd;
    fill: #888;
}

.unit {
    position: relative;
}

.unit select {
    appearance: none;
    width: 75px;
    height: 27px;
    padding: 0 4px;
    border: 1px solid #a9a9a9;
    border-radius: 3px;
    background-color: #f2f2f2;
    font: inherit;
    font-size: 14px;
    color: #777;
}

.unit svg {
    position: absolute;
    right: 6px;
    top: 11px;
}

.finish {
    display: flex;
    flex-direction: column;
    align-items: flex-start;
    gap: 4px;
    margin: 8px 0 10px;
    padding: 4px 0 0 15px;
    border-left: 1px solid #a5a5a5;
}

.check {
    display: flex;
    align-items: center;
    gap: 3px;
    height: 30px;
}

.check input {
    appearance: none;
    width: 16px;
    height: 16px;
    margin: 0;
    border: 1px solid #8f8f8f;
    background: linear-gradient(135deg, #cfcfcf, #f6f6f6);
    box-shadow: inset 0 0 0 2px #f0f0f0;
}

.log {
    padding-left: 2px;
    line-height: 30px;
    color: #a0a0a0;
}

.cursor {
    position: absolute;
    left: 1023px;
    top: 563px;
    width: 16px;
    height: 25px;
}

/* taskbar */
.taskbar {
    display: flex;
    height: 50px;
    border-top: 2px solid #8a97a6;
    border-bottom: 1px solid #10161e;
    background: linear-gradient(90deg, #8093ab 60px, #a9c0de 100px, #a9c0de 1440px, #7e93ac 1480px);
}

.taskbar > button {
    display: flex;
    justify-content: center;
    align-items: center;
}

.start {
    width: 66px;
}

.pinned {
    width: 64px;
}

.pinned.wide {
    width: 90px;
}

.tasks {
    display: flex;
    gap: 3px;
    padding-left: 8px;
}

.task {
    display: flex;
    justify-content: center;
    align-items: center;
    width: 74px;
    border: 1px solid #54657a;
    border-radius: 3px;
    background: linear-gradient(135deg, #d3deea, #a9bfd7 60%, #b6c9de);
    box-shadow: inset 0 0 0 1px #dbe6f2;
}

.task.light {
    background: linear-gradient(135deg, #e2e7ef, #c0cbda 50%, #e3e8ef);
}

.task.plain {
    border-color: transparent;
    background: none;
    box-shadow: none;
}

.task.stacked {
    padding-right: 6px;
    box-shadow: inset 0 0 0 1px #dbe6f2, inset -6px 0 0 #a9bfd7, inset -7px 0 0 #54657a;
}

.tray {
    display: flex;
    align-items: center;
    margin-left: auto;
    gap: 12px;
    padding-right: 8px;
    color: #f4f7fa;
}

.lang {
    font-family: "Liberation Serif", serif;
    font-size: 13px;
    font-weight: 700;
    margin: 0 -3px 4px 0;
}

.lang + svg {
    margin-bottom: 4px;
}

.tray .low {
    margin-top: 2px;
}

.clock {
    display: flex;
    flex-direction: column;
    align-items: center;
    line-height: 22px;
    padding: 0 0 3px 4px;
}

.show-desktop {
    width: 18px;
    border: 1px solid #8e9cac;
    background: linear-gradient(135deg, #8d9aaa, #4b5968 60%, #7b8998);
}

/* volume overlay */
.volume {
    position: absolute;
    left: 468px;
    top: 17px;
    width: 873px;
    height: 185px;
    border-radius: 54px;
    background-color: rgba(230, 230, 230, 0.93);
}

.volume-head {
    display: flex;
    align-items: center;
    height: 90px;
    padding: 0 54px 0 42px;
}

.volume-head label {
    padding-top: 27px;
    font-size: 31px;
    line-height: 36px;
    font-weight: 500;
    color: #000;
}

.remote-tools {
    display: flex;
    align-items: center;
    margin: 0 auto 7px 230px;
}

.bars {
    display: flex;
    flex-direction: column;
    gap: 11px;
    padding: 10px 30px 9px 0;
    margin-right: 32px;
    border-right: 3px solid #e2e2e2;
}

.bars i {
    width: 72px;
    height: 7px;
    background-color: #e8e8e8;
}

.expand {
    padding-top: 25px;
}

.volume-row {
    display: flex;
    align-items: center;
    gap: 53px;
    padding: 4px 0 0 53px;
}

.volume-row input {
    appearance: none;
    width: 585px;
    height: 53px;
    margin: 0;
    background: none;
}

.volume-row input::-webkit-slider-runnable-track {
    height: 6px;
    border-radius: 3px;
    background-color: #3a93e6;
    box-shadow: 0 0 1px #9ccdf8;
}

.volume-row input::-webkit-slider-thumb {
    appearance: none;
    width: 52px;
    height: 52px;
    margin-top: -23px;
    border: 2px solid #a8a8a8;
    border-radius: 50%;
    background-color: #fff;
}

/* phone navigation bar */
.phone-nav {
    display: flex;
    flex-direction: column;
    justify-content: space-between;
    align-items: center;
    width: 112px;
    padding: 188px 0 191px;
    background-color: #e7e7e7;
}
```
